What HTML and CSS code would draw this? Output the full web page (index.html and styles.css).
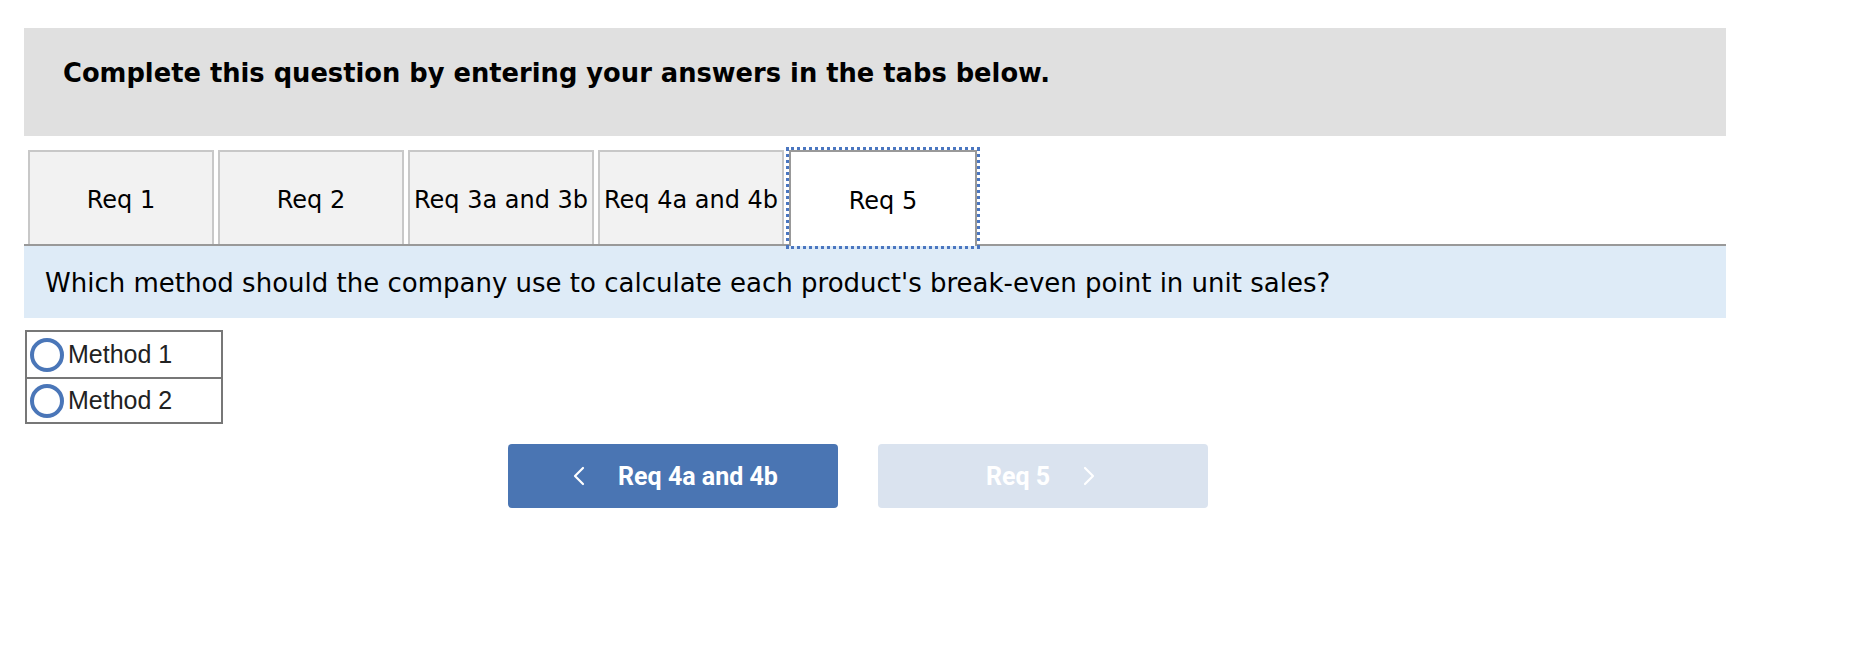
FILE: index.html
```html
<!DOCTYPE html>
<html lang="en">
<head>
<meta charset="utf-8">
<title>Req 5</title>
<link rel="stylesheet" href="styles.css">
</head>
<body>
<div class="page">
  <div class="header">Complete this question by entering your answers in the tabs below.</div>
  <div class="tabs">
    <div class="tab">Req 1</div>
    <div class="tab">Req 2</div>
    <div class="tab">Req 3a and 3b</div>
    <div class="tab">Req 4a and 4b</div>
    <div class="tab active">Req 5</div>
  </div>
  <div class="question">Which method should the company use to calculate each product's break-even point in unit sales?</div>
  <div class="options">
    <label class="option"><span class="radio"></span>Method 1</label>
    <label class="option"><span class="radio"></span>Method 2</label>
  </div>
  <div class="nav">
    <button class="btn prev"><svg class="chev" width="14" height="20" viewBox="0 0 14 20"><path d="M11 2 L3 10 L11 18" fill="none" stroke="#fff" stroke-width="2.2" stroke-linecap="round" stroke-linejoin="round"/></svg><span>Req 4a and 4b</span></button>
    <button class="btn next"><span>Req 5</span><svg class="chev" width="14" height="20" viewBox="0 0 14 20"><path d="M3 2 L11 10 L3 18" fill="none" stroke="#fff" stroke-width="2.2" stroke-linecap="round" stroke-linejoin="round"/></svg></button>
  </div>
</div>
</body>
</html>
```
FILE: styles.css
```css
* { box-sizing: border-box; }
body { margin: 0; background: #fff; }
.page { margin-left: 24px; width: 1702px; padding-top: 28px; }
.header {
  height: 108px;
  background: #e0e0e0;
  padding: 30px 0 0 39px;
  font-family: "DejaVu Sans", Verdana, sans-serif;
  font-weight: bold;
  font-size: 25.75px;
  line-height: 30px;
  color: #000;
}
.tabs {
  margin-top: 14px;
  padding-left: 4px;
  display: flex;
  align-items: flex-end;
  gap: 4px;
  border-bottom: 2px solid #999;
  height: 96px;
}
.tab {
  width: 186px;
  height: 94px;
  background: #f2f2f2;
  border: 2px solid #c8c8c8;
  border-bottom: none;
  display: flex;
  align-items: center;
  justify-content: center;
  padding-top: 4px;
  font-family: "DejaVu Sans", Verdana, sans-serif;
  font-size: 24px;
  color: #000;
  white-space: nowrap;
}
.tab.active {
  width: 188px;
  height: 96px;
  margin-left: 1px;
  margin-bottom: -2px;
  background: #fff;
  border-color: #999;
  outline: 3px dotted #4a76c0;
  outline-offset: 0;
  position: relative;
  z-index: 1;
}
.question {
  height: 72px;
  background: #deebf7;
  padding-left: 21px;
  display: flex;
  align-items: center;
  padding-top: 2px;
  font-family: "DejaVu Sans", Verdana, sans-serif;
  font-size: 26px;
  color: #000;
}
.options {
  margin-top: 12px;
  margin-left: 1px;
  width: 198px;
  border: 2px solid #777;
  display: flex;
  flex-direction: column;
}
.option {
  height: 45px;
  display: flex;
  align-items: center;
  gap: 4px;
  padding-left: 3px;
  font-family: "Liberation Sans", Arial, sans-serif;
  font-size: 25px;
  color: #222;
}
.option + .option { border-top: 2px solid #777; }
.radio {
  width: 34px;
  height: 34px;
  border: 4px solid #4a76b8;
  border-radius: 50%;
  flex: none;
}
.nav {
  margin-top: 20px;
  padding-left: 484px;
  display: flex;
  gap: 40px;
}
.btn {
  width: 330px;
  height: 64px;
  border: none;
  border-radius: 4px;
  display: flex;
  align-items: center;
  justify-content: center;
  font-family: Roboto, "Liberation Sans", sans-serif;
  font-weight: bold;
  font-size: 25px;
  color: #fff;
  padding: 0;
}
.btn.prev { background: #4a75b3; gap: 32px; padding-left: 4px; }
.btn.next { background: #dae3ef; gap: 32px; padding-right: 4px; }
.chev { flex: none; }
```
